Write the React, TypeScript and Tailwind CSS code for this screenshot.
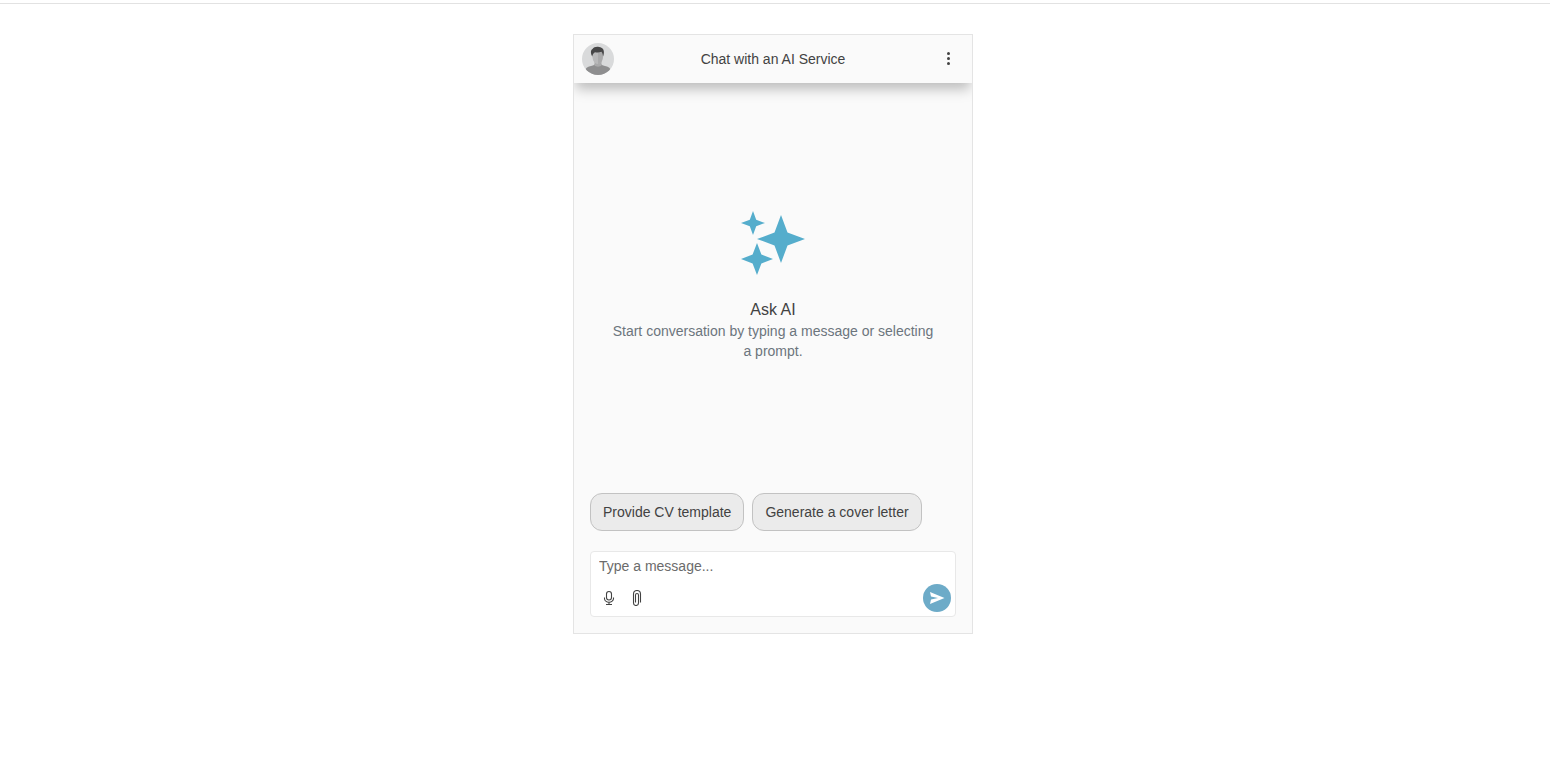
const prompts = [
  { id: 1, text: "Provide CV template" },
  { id: 2, text: "Generate a cover letter" },
];

const Avatar = () => (
  <svg viewBox="0 0 32 32" className="size-8 rounded-full" role="img" aria-label="User avatar">
    <rect width="32" height="32" fill="#d9dadb" />
    <path d="M3 32c0-6 1-7.500 4-8.500 3-1 5-1 6-2.500h6c1 1.500 3 1.500 6 2.500s4 2.500 4 8.500z" fill="#8e8e8f" />
    <path d="M12.500 17h7v5.500c-1.500 1.500-5.500 1.500-7 0z" fill="#a9a9aa" />
    <path d="M10.500 9c-1 7 1.500 12 5.200 12s6.300-5 5.300-12c-1-3-9.500-3-10.500 0z" fill="#b9b9ba" />
    <path d="M16 8.500h5c.6 7-1.500 12.500-5 12.500z" fill="#aaaaab" />
    <path d="M10.200 13.500C8.500 10.500 8.400 7 10.500 6c1-1.700 3.200-2.500 5.500-2.300 3.500.2 6 2 5.900 5.300 0 1.800-.3 3-.9 4.500-.1-2-.6-3.500-1.500-4.700-2.500.9-4.700.8-6.500.4-1.600 1-2.400 2.200-2.800 4.300z" fill="#474748" />
  </svg>
);

const DotsIcon = () => (
  <svg viewBox="0 0 16 16" className="size-4" fill="currentColor" aria-hidden="true">
    <circle cx="8.5" cy="2.5" r="1.5" />
    <circle cx="8.5" cy="7.5" r="1.5" />
    <circle cx="8.5" cy="12.5" r="1.5" />
  </svg>
);

const SparklesIcon = () => (
  <svg viewBox="0 0 64 64" className="size-16" fill="#55adcc" aria-hidden="true">
    <path d="M40 4l6.500 17.500L64 28l-17.500 6.500L40 52l-6.500-17.500L16 28l17.500-6.500z" />
    <path d="M12 0l3.200 8.800L24 12l-8.800 3.200L12 24l-3.200-8.800L0 12l8.800-3.200z" />
    <path d="M16 32l4.400 11.600L32 48l-11.600 4.400L16 64l-4.400-11.600L0 48l11.600-4.400z" />
  </svg>
);

const MicIcon = () => (
  <svg viewBox="0 0 16 16" className="size-4" fill="none" stroke="currentColor" strokeWidth="1.1" aria-hidden="true">
    <rect x="5.5" y="1.5" width="5" height="8.5" rx="2.5" />
    <path d="M3.500 7.500v1a4.500 3.700 0 0 0 9 0v-1M8 12.300v2.200M5 14.500h6" />
  </svg>
);

const ClipIcon = () => (
  <svg viewBox="0 0 16 16" className="size-4" fill="none" stroke="currentColor" strokeWidth="1.1" aria-hidden="true">
    <path d="M11.500 12.500V4a3.500 3.500 0 0 0-7 0v9a2.500 2.500 0 0 0 5 0V5a1.500 1.500 0 0 0-3 0v7.500" />
  </svg>
);

const SendIcon = () => (
  <svg viewBox="0 0 16 16" className="size-4" fill="currentColor" aria-hidden="true">
    <path d="M1 2l14.500 6L1 14l1-4.500L9 8 2 6.500z" />
  </svg>
);

const App = () => {
  return (
    <div className="min-h-screen bg-white pt-[3px] font-['Liberation_Sans',Arial,sans-serif] text-sm text-[#424242]">
      <main className="flex justify-center border-t border-[#e2e2e2] pt-[30px] pr-1">
        <section className="flex min-h-[600px] w-full max-w-[400px] flex-col overflow-hidden border border-[#e4e4e4] bg-[#fafafa]">
          {/* HEADER */}
          <header className="flex h-12 items-center justify-between bg-[#fafafa] px-2 shadow-[0_8px_12px_-2px_rgba(0,0,0,0.25)]">
            <Avatar />
            <h1>Chat with an AI Service</h1>
            <button type="button" aria-label="More options" className="flex size-8 items-center justify-center">
              <DotsIcon />
            </button>
          </header>

          {/* EMPTY STATE */}
          <div className="flex flex-1 flex-col items-center justify-center px-9 text-center">
            <SparklesIcon />
            <h2 className="mt-6 text-base leading-[22px]">Ask AI</h2>
            <p className="leading-5 text-[#6c757d]">
              Start conversation by typing a message or selecting a prompt.
            </p>
          </div>

          {/* PROMPTS */}
          <div className="flex flex-wrap gap-2 px-4 pt-1">
            {prompts.map((prompt) => (
              <button
                key={prompt.id}
                type="button"
                className="h-[38px] rounded-xl border border-[#c2c2c2] bg-[#ebebeb] px-3"
              >
                {prompt.text}
              </button>
            ))}
          </div>

          {/* MESSAGE BOX */}
          <form className="mx-4 mt-5 mb-4 rounded border border-[#e8e8e8] bg-white">
            <input
              type="text"
              aria-label="Message"
              placeholder="Type a message..."
              className="block h-7 w-full px-2 outline-none placeholder:text-[#6b6b6b]"
            />
            <div className="flex p-1">
              <button type="button" aria-label="Record voice" className="flex size-7 items-center justify-center">
                <MicIcon />
              </button>
              <button type="button" aria-label="Attach file" className="flex size-7 items-center justify-center">
                <ClipIcon />
              </button>
              <button
                type="button"
                aria-label="Send message"
                className="ml-auto flex size-7 items-center justify-center rounded-full bg-[#6dabc8] text-white"
              >
                <SendIcon />
              </button>
            </div>
          </form>
        </section>
      </main>
    </div>
  );
};

export default App;
